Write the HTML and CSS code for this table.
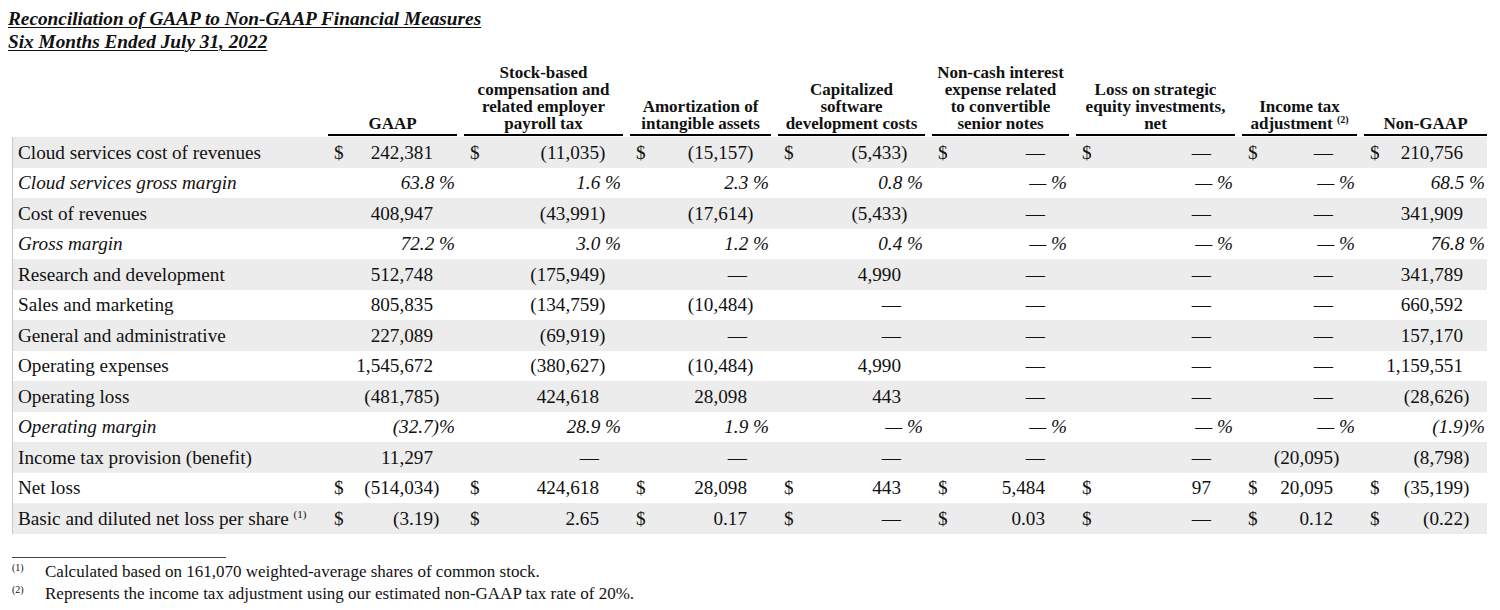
FILE: index.html
```html
<!DOCTYPE html>
<html>
<head>
<meta charset="utf-8">
<link rel="stylesheet" href="styles.css">
</head>
<body>
<div class="title">
  <div>Reconciliation of GAAP to Non-GAAP Financial Measures</div>
  <div>Six Months Ended July 31, 2022</div>
</div>

<div class="wrap">
  <div class="row head">
    <div class="hl"></div>
    <div class="h">GAAP</div>
    <div class="h">Stock-based<br>compensation and<br>related employer<br>payroll tax</div>
    <div class="h">Amortization of<br>intangible assets</div>
    <div class="h">Capitalized<br>software<br>development costs</div>
    <div class="h">Non-cash interest<br>expense related<br>to convertible<br>senior notes</div>
    <div class="h">Loss on strategic<br>equity investments,<br>net</div>
    <div class="h">Income tax<br>adjustment <sup class="hs">(2)</sup></div>
    <div class="h">Non-GAAP</div>
  </div>

  <div class="body">
    <div class="row sh">
      <div class="lbl">Cloud services cost of revenues</div>
      <div class="c"><span class="d">$</span><span class="n">242,381</span></div>
      <div class="c"><span class="d">$</span><span class="n">(11,035<span class="p">)</span></span></div>
      <div class="c"><span class="d">$</span><span class="n">(15,157<span class="p">)</span></span></div>
      <div class="c"><span class="d">$</span><span class="n">(5,433<span class="p">)</span></span></div>
      <div class="c"><span class="d">$</span><span class="n">—</span></div>
      <div class="c"><span class="d">$</span><span class="n">—</span></div>
      <div class="c"><span class="d">$</span><span class="n">—</span></div>
      <div class="c"><span class="d">$</span><span class="n">210,756</span></div>
    </div>
    <div class="row it">
      <div class="lbl">Cloud services gross margin</div>
      <div class="c pc">63.8 %</div>
      <div class="c pc">1.6 %</div>
      <div class="c pc">2.3 %</div>
      <div class="c pc">0.8 %</div>
      <div class="c pc">— %</div>
      <div class="c pc">— %</div>
      <div class="c pc">— %</div>
      <div class="c pc">68.5 %</div>
    </div>
    <div class="row sh">
      <div class="lbl">Cost of revenues</div>
      <div class="c"><span class="n">408,947</span></div>
      <div class="c"><span class="n">(43,991<span class="p">)</span></span></div>
      <div class="c"><span class="n">(17,614<span class="p">)</span></span></div>
      <div class="c"><span class="n">(5,433<span class="p">)</span></span></div>
      <div class="c"><span class="n">—</span></div>
      <div class="c"><span class="n">—</span></div>
      <div class="c"><span class="n">—</span></div>
      <div class="c"><span class="n">341,909</span></div>
    </div>
    <div class="row it">
      <div class="lbl">Gross margin</div>
      <div class="c pc">72.2 %</div>
      <div class="c pc">3.0 %</div>
      <div class="c pc">1.2 %</div>
      <div class="c pc">0.4 %</div>
      <div class="c pc">— %</div>
      <div class="c pc">— %</div>
      <div class="c pc">— %</div>
      <div class="c pc">76.8 %</div>
    </div>
    <div class="row sh">
      <div class="lbl">Research and development</div>
      <div class="c"><span class="n">512,748</span></div>
      <div class="c"><span class="n">(175,949<span class="p">)</span></span></div>
      <div class="c"><span class="n">—</span></div>
      <div class="c"><span class="n">4,990</span></div>
      <div class="c"><span class="n">—</span></div>
      <div class="c"><span class="n">—</span></div>
      <div class="c"><span class="n">—</span></div>
      <div class="c"><span class="n">341,789</span></div>
    </div>
    <div class="row">
      <div class="lbl">Sales and marketing</div>
      <div class="c"><span class="n">805,835</span></div>
      <div class="c"><span class="n">(134,759<span class="p">)</span></span></div>
      <div class="c"><span class="n">(10,484<span class="p">)</span></span></div>
      <div class="c"><span class="n">—</span></div>
      <div class="c"><span class="n">—</span></div>
      <div class="c"><span class="n">—</span></div>
      <div class="c"><span class="n">—</span></div>
      <div class="c"><span class="n">660,592</span></div>
    </div>
    <div class="row sh">
      <div class="lbl">General and administrative</div>
      <div class="c"><span class="n">227,089</span></div>
      <div class="c"><span class="n">(69,919<span class="p">)</span></span></div>
      <div class="c"><span class="n">—</span></div>
      <div class="c"><span class="n">—</span></div>
      <div class="c"><span class="n">—</span></div>
      <div class="c"><span class="n">—</span></div>
      <div class="c"><span class="n">—</span></div>
      <div class="c"><span class="n">157,170</span></div>
    </div>
    <div class="row">
      <div class="lbl">Operating expenses</div>
      <div class="c"><span class="n">1,545,672</span></div>
      <div class="c"><span class="n">(380,627<span class="p">)</span></span></div>
      <div class="c"><span class="n">(10,484<span class="p">)</span></span></div>
      <div class="c"><span class="n">4,990</span></div>
      <div class="c"><span class="n">—</span></div>
      <div class="c"><span class="n">—</span></div>
      <div class="c"><span class="n">—</span></div>
      <div class="c"><span class="n">1,159,551</span></div>
    </div>
    <div class="row sh">
      <div class="lbl">Operating loss</div>
      <div class="c"><span class="n">(481,785<span class="p">)</span></span></div>
      <div class="c"><span class="n">424,618</span></div>
      <div class="c"><span class="n">28,098</span></div>
      <div class="c"><span class="n">443</span></div>
      <div class="c"><span class="n">—</span></div>
      <div class="c"><span class="n">—</span></div>
      <div class="c"><span class="n">—</span></div>
      <div class="c"><span class="n">(28,626<span class="p">)</span></span></div>
    </div>
    <div class="row it">
      <div class="lbl">Operating margin</div>
      <div class="c pc">(32.7)%</div>
      <div class="c pc">28.9 %</div>
      <div class="c pc">1.9 %</div>
      <div class="c pc">— %</div>
      <div class="c pc">— %</div>
      <div class="c pc">— %</div>
      <div class="c pc">— %</div>
      <div class="c pc">(1.9)%</div>
    </div>
    <div class="row sh">
      <div class="lbl">Income tax provision (benefit)</div>
      <div class="c"><span class="n">11,297</span></div>
      <div class="c"><span class="n">—</span></div>
      <div class="c"><span class="n">—</span></div>
      <div class="c"><span class="n">—</span></div>
      <div class="c"><span class="n">—</span></div>
      <div class="c"><span class="n">—</span></div>
      <div class="c"><span class="n">(20,095<span class="p">)</span></span></div>
      <div class="c"><span class="n">(8,798<span class="p">)</span></span></div>
    </div>
    <div class="row">
      <div class="lbl">Net loss</div>
      <div class="c"><span class="d">$</span><span class="n">(514,034<span class="p">)</span></span></div>
      <div class="c"><span class="d">$</span><span class="n">424,618</span></div>
      <div class="c"><span class="d">$</span><span class="n">28,098</span></div>
      <div class="c"><span class="d">$</span><span class="n">443</span></div>
      <div class="c"><span class="d">$</span><span class="n">5,484</span></div>
      <div class="c"><span class="d">$</span><span class="n">97</span></div>
      <div class="c"><span class="d">$</span><span class="n">20,095</span></div>
      <div class="c"><span class="d">$</span><span class="n">(35,199<span class="p">)</span></span></div>
    </div>
    <div class="row sh">
      <div class="lbl">Basic and diluted net loss per share <sup class="ls">(1)</sup></div>
      <div class="c"><span class="d">$</span><span class="n">(3.19<span class="p">)</span></span></div>
      <div class="c"><span class="d">$</span><span class="n">2.65</span></div>
      <div class="c"><span class="d">$</span><span class="n">0.17</span></div>
      <div class="c"><span class="d">$</span><span class="n">—</span></div>
      <div class="c"><span class="d">$</span><span class="n">0.03</span></div>
      <div class="c"><span class="d">$</span><span class="n">—</span></div>
      <div class="c"><span class="d">$</span><span class="n">0.12</span></div>
      <div class="c"><span class="d">$</span><span class="n">(0.22<span class="p">)</span></span></div>
    </div>
  </div>

  <div class="notes">
    <div class="rule"></div>
    <div class="note"><span class="mk">(1)</span><span>Calculated based on 161,070 weighted-average shares of common stock.</span></div>
    <div class="note"><span class="mk">(2)</span><span>Represents the income tax adjustment using our estimated non-GAAP tax rate of 20%.</span></div>
  </div>
</div>
</body>
</html>
```

FILE: styles.css
```css
html, body {
  background: #ffffff;
}
body {
  margin: 8px;
  font-family: "Liberation Serif", "Times New Roman", serif;
  color: #111;
}
.title {
  margin-top: -1px;
  font-size: 19.3px;
  line-height: 23px;
  font-weight: bold;
  font-style: italic;
  text-decoration: underline;
  text-decoration-thickness: 1px;
  text-underline-offset: 2px;
}
.wrap {
  margin-left: 4px;
  width: 1475px;
}
.row {
  display: grid;
  grid-template-columns: 308px 129px 159px 141px 147px 137px 159px 115px 123px;
  column-gap: 7px;
  height: 30.5px;
  align-items: center;
  font-size: 19.2px;
}
.head {
  height: auto;
  margin-top: 11px;
  margin-left: 1px;
  margin-bottom: 1px;
  align-items: end;
}
.h {
  font-size: 17px;
  line-height: 17px;
  font-weight: bold;
  text-align: center;
  border-bottom: 2px solid #000;
  padding-bottom: 2px;
  white-space: nowrap;
}
.hs {
  font-size: 10px;
  line-height: 0;
  vertical-align: 6px;
}
.body {
  border-left: 1px solid #c9c9c9;
}
.sh {
  background: #ececec;
}
.lbl {
  padding-left: 5px;
  padding-top: 1px;
  white-space: nowrap;
}
.ls {
  font-size: 11px;
  line-height: 0;
  vertical-align: 7px;
}
.it {
  font-style: italic;
}
.c {
  display: flex;
  align-items: center;
  padding: 1px 24px 0 6px;
  white-space: nowrap;
}
.c .n {
  margin-left: auto;
}
.c .p {
  margin-right: -0.333em;
}
.c.pc {
  justify-content: flex-end;
  padding-right: 2px;
}
.notes {
  margin-top: 23px;
  font-size: 17px;
}
.rule {
  width: 214px;
  border-top: 1px solid #444;
  margin-bottom: 3px;
}
.note {
  display: flex;
  line-height: 22px;
}
.mk {
  width: 33px;
  font-size: 10px;
  line-height: 0;
  position: relative;
  top: -4px;
  align-self: center;
}
```
